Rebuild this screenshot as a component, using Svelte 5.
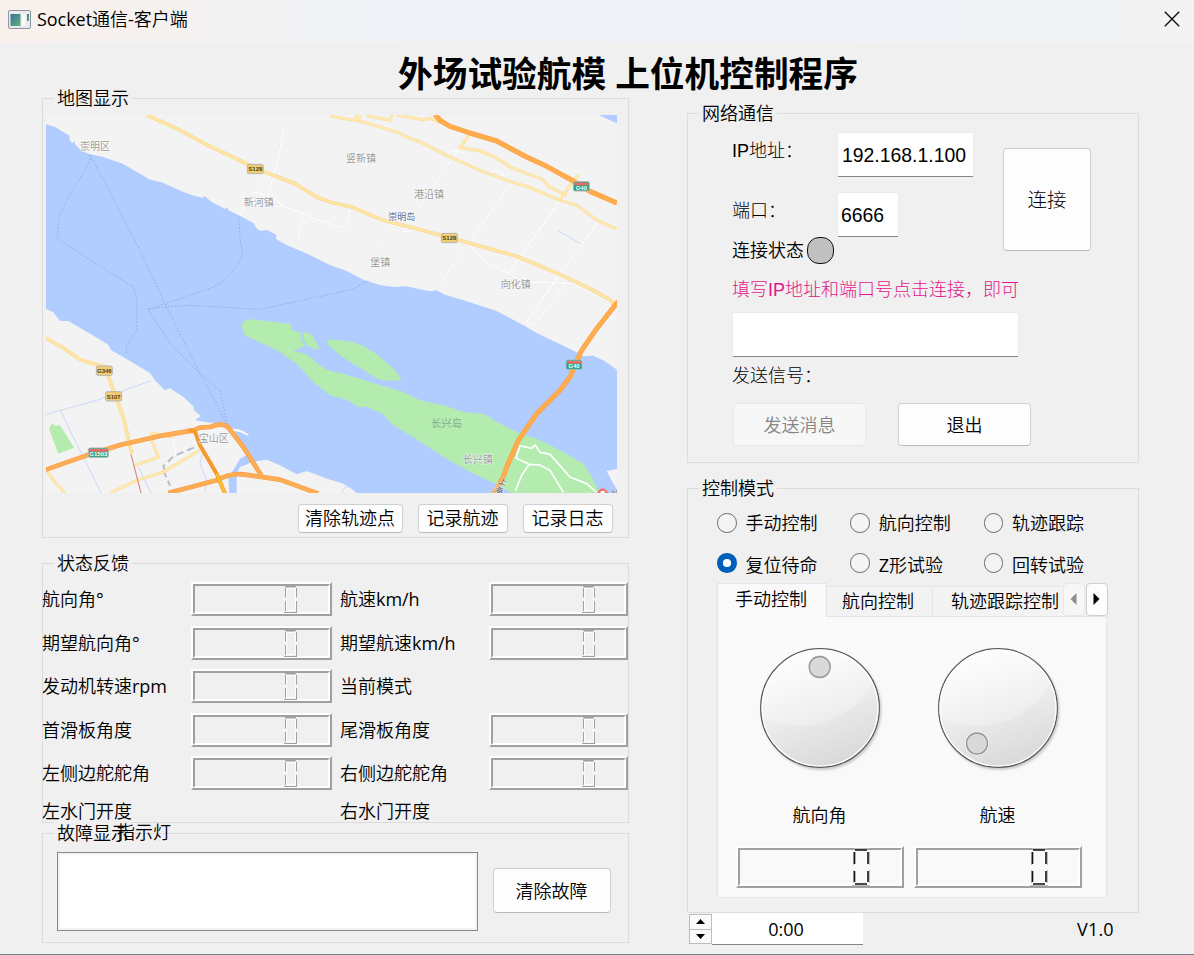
<script>
  const feedback = [
    ['航向角°', true, '航速km/h', true],
    ['期望航向角°', true, '期望航速km/h', true],
    ['发动机转速rpm', true, '当前模式', false],
    ['首滑板角度', true, '尾滑板角度', true],
    ['左侧边舵舵角', true, '右侧边舵舵角', true],
    ['左水门开度', false, '右水门开度', false],
  ];
  const modes = ['手动控制', '航向控制', '轨迹跟踪', '复位待命', 'Z形试验', '回转试验'];
  let mode = $state('复位待命');
  const dials = [
    { name: '航向角', kx: 59.7, ky: 19 },
    { name: '航速', kx: 39, ky: 95.5 },
  ];

  // Latin runs and CJK runs are set in different weights.
  const runs = (text) => text.match(/[\x00-\xff]+|[^\x00-\xff]+/g) ?? [];
  const isLatin = (run) => run.charCodeAt(0) < 256;

  const majorYellow = [
    'M320 14L415 57L500 103L640 170L700 195L765 220L830 260L870 275L935 290L1030 330L1110 350L1230 382L1330 410L1430 438L1560 492L1660 540L1710 568L1722 584',
    'M18 683L70 713L120 748L195 770L220 840L250 920L275 1030',
  ];
  const minorYellow = [
    'M870 18L960 32L1080 68L1095 78L1140 95L1220 135L1320 180L1415 215L1470 232L1560 270L1610 285L1675 332L1731 356',
    'M1290 70L1260 112L1320 122L1365 140L1415 172L1510 208L1525 228L1580 256',
    'M948 14L954 32M960 14L954 32M980 16L1050 30L1057 14M1070 14L1150 28L1170 24L1290 68M1600 210L1560 270M1600 206L1611 200L1604 220',
    'M335 990L355 1040L285 1065M210 1148L290 1110L370 1085L480 1020M18 1078L45 1115L75 1148M330 968L400 980',
  ];
  const whiteRoads = [
    'M733 45L712 160L682 260M600 316L640 250L670 205L700 195M640 245L700 262L730 288L790 310L830 328L870 338M790 312L775 386M700 288L730 288',
    'M870 340L920 356L932 290M1010 405L1055 345L1090 343M1090 365L1256 115L1300 165M1090 365L1130 360M1222 132L1240 120L1256 125',
    'M1415 215L1285 400L1195 528M1560 272L1405 488M1675 335L1560 490L1495 584M1285 400L1320 435L1330 450L1405 490L1450 515L1575 518L1600 520L1700 575M1575 520L1530 584M1345 188L1370 180L1400 205',
    'M1505 570L1460 632L1483 644L1540 570',
    'M395 980L408 1030L370 1070M45 1115L60 1148M565 956L600 962L625 974M590 958L612 966',
  ];
  const labels = [
    ['崇明区', 120, 118], ['新河镇', 611, 287], ['竖新镇', 918, 154], ['港沿镇', 1122, 262],
    ['堡镇', 991, 467], ['向化镇', 1382, 532], ['宝山区', 476, 995],
  ];
  const badges = [
    ['S128', 622, 162, 48, 'y'], ['S128', 1204, 369, 48, 'y'], ['G346', 169, 767, 48, 'y'],
    ['S107', 197, 844, 48, 'y'], ['G40', 1600, 214, 48, 'g'], ['G40', 1578, 749, 48, 'g'], ['G1503', 145, 1013, 60, 'g'],
  ];
  const expressway = 'M1185 12L1200 30L1230 48L1290 68L1370 92L1460 140L1520 168L1600 212L1650 243L1731 278M1735 572L1670 655L1625 720L1590 800L1560 840L1490 910L1435 990L1400 1070L1390 1100L1362 1150';
  const ringRoad = 'M18 1078L140 1035L240 1004L370 975L460 960L480 952L510 950Q550 935 565 952L610 1010L665 1097M385 1148L530 1110Q570 1088 610 1092L720 1108L835 1150';
</script>

{#snippet mixed(text)}{#each runs(text) as run}{#if isLatin(run)}<span class="lat">{run}</span>{:else}{run}{/if}{/each}{/snippet}

{#snippet lcd(big)}
  <div class="lcd" class:big>
    <div class="well">
      {#if big}
        <svg width="18" height="38" viewBox="0 0 18 38">
          <path d="M2 .5H17M1.5 4V17M1.5 22V35M17.5 4V17M17.5 22V35M0 37.5H18" stroke="#bcbcbc" fill="none" />
          <path d="M3 2H15M3 36H15M2.5 4V16M2.5 23V34M16 4V16M16 23V34" stroke="#111" stroke-width="1.6" fill="none" />
        </svg>
      {:else}
        <svg width="15" height="28" viewBox="0 0 15 28">
          <path d="M3 3.5H12M3 25.5H12M3.5 4V12M3.5 16V25M12.5 4V12M12.5 16V25M.5 14H4M11 14H14.5" stroke="#fff" fill="none" />
          <path d="M2 1.5H13M1 27.5H14M2.5 3V12.5M2.5 16V26M13.5 3V12.5M13.5 16V27" stroke="#a0a0a0" fill="none" />
          <path d="M3 2.5H12" stroke="#c8c8c8" />
        </svg>
      {/if}
    </div>
  </div>
{/snippet}

<div class="window">
  <header>
    <svg class="appicon" width="23" height="19" viewBox="0 0 23 19">
      <defs><linearGradient id="ai" x2="1" y2="1"><stop stop-color="#3f6d9c" /><stop offset="1" stop-color="#5fb57a" /></linearGradient></defs>
      <rect x=".5" y=".5" width="22" height="18" rx="1.5" fill="#e9ebee" stroke="#8f959c" />
      <rect x="2.5" y="4" width="10" height="12" fill="url(#ai)" />
      <rect x="13.5" y="4" width="4" height="12" fill="#fafafa" />
      <rect x="19" y="4" width="2" height="7" fill="url(#ai)" />
    </svg>
    <span class="caption">{@render mixed('Socket通信-客户端')}</span>
    <svg class="close" width="16" height="16" viewBox="0 0 16 16"><path d="M.8.8L15.2 15.2M15.2.8L.8 15.2" stroke="#111" stroke-width="1.4" /></svg>
  </header>

  <h1>外场试验航模 上位机控制程序</h1>

  <main>
    <div class="left">
      <section class="group map-group">
        <h2>地图显示</h2>
        <svg class="map" width="571" height="378" viewBox="18 14 1713 1134">
          <rect x="18" y="14" width="1713" height="1134" fill="#f3f3f3" />
          <path fill="#b1cdff" d="M18 42L45 50L75 68L88 76L90 92L97 98L106 92L104 100L125 122L150 132L190 140L248 160L300 190L325 205L345 212L365 216L430 245L465 257L488 262L494 257L515 275L556 296L562 290L565 300L600 316L640 338L652 357L665 362L680 358L710 374L708 386L740 404L795 427L870 464L920 482L970 508L1020 524L1060 530L1100 528L1170 543L1190 540L1215 553L1280 573L1370 602L1400 618L1450 645L1490 668L1540 692L1570 706L1615 728L1630 738L1660 736L1690 750L1731 778V1148H950L930 1132L905 1118L870 1108L800 1082L770 1092L720 1065L680 1048L640 1054L600 1070L590 1090V1148H568L565 1100L580 1080L600 1045L620 1035L595 1000L575 962L555 940L500 936L466 930L482 916L462 900L460 888L430 860L390 834L375 840L345 810L330 788L245 738L212 718L205 703L130 658L85 632L60 632L38 657L60 632L40 606L18 595Z" />
          <path fill="#b1cdff" d="M1675 14H1731V39Z" />
          <path fill="#f3f3f3" d="M1700 1082L1731 1076V1140L1716 1112Z" />
          <g fill="#b4ebaf">
            <path d="M605 650Q606 628 630 627L700 634L755 642L752 655L765 663L782 665L785 690L800 705L825 718L837 720Q835 695 808 667L790 665L790 690L804 708L837 719L800 705L765 720L800 726L830 755L855 775L870 782L910 790L1000 818L1090 845L1140 870L1210 885L1270 905L1335 912L1370 935L1430 965L1490 985L1570 1025L1630 1060L1655 1100L1675 1140L1680 1148H1415L1370 1122L1290 1085L1220 1045L1170 1013L1110 975L1060 945L1025 908L1000 900L980 888L960 892L920 868L870 855L820 815L770 760L715 722L640 687L615 675Z" />
            <path d="M862 690Q870 685 940 695Q985 710 1030 748Q1060 772 1084 805Q1080 814 1030 810Q1005 806 970 778Q900 740 862 700Z" />
            <path d="M35 942L40 938L42 946L60 945L102 1012L55 1030L27 955Z" />
          </g>
          <path d="M763 720L800 728L828 752L850 768L872 772M786 664L788 692L804 712L840 722L872 762" stroke="#b1cdff" stroke-width="6" fill="none" />
          <path d="M18 912L170 870L240 845L333 811M62 900L90 960L135 1050L183 1148M295 1070L333 1148M490 1020L480 1060L500 1110L495 1145M440 950V965M1552 360L1622 400M905 1148L915 1130L930 1130" stroke="#bfd4f8" stroke-width="2.5" fill="none" />
          <path d="M150 134V150L125 195L85 260L55 325L52 385L160 455L280 530L290 560V660L260 705L258 732M150 134L225 275L300 420L375 580L470 770L540 900L565 955M596 320L600 380L608 435Q570 510 520 530L375 580L325 598L395 705L470 780L540 840L565 955M325 595L400 588L450 585L660 597L720 584L870 552L940 535L985 512" stroke="#8eacdf" stroke-width="2.8" stroke-dasharray="5 5" fill="none" />
          {#each whiteRoads as d}
            <path {d} stroke="#e6e6e6" stroke-width="6" fill="none" /><path {d} stroke="#fff" stroke-width="4" fill="none" />
          {/each}
          <path d="M1428 1044L1440 1006L1475 1014L1485 1004L1500 1026L1530 1032L1590 1100L1640 1120L1670 1146M1428 1044L1468 1062L1500 1064L1530 1080L1570 1146M1468 1062L1445 1095L1426 1142" stroke="#fff" stroke-width="5" fill="none" />
          <path d="M375 1082L370 1068L400 1038L470 1008M370 1080L390 1126" stroke="#b7bec9" stroke-width="6" stroke-dasharray="22 12" fill="none" />
          {#each minorYellow as d}
            <path {d} stroke="#f8da92" stroke-width="9" fill="none" /><path {d} stroke="#ffe9b4" stroke-width="6" fill="none" />
          {/each}
          {#each majorYellow as d}
            <path {d} stroke="#f6d68c" stroke-width="11" fill="none" /><path {d} stroke="#ffe5a5" stroke-width="8" fill="none" />
          {/each}
          <path d="M273 1032L303 1148" stroke="#d98b85" stroke-width="3.5" />
          <path d={expressway} stroke="#f79f45" stroke-width="15" stroke-linejoin="round" fill="none" />
          <path d={expressway} stroke="#ffac4d" stroke-width="12" stroke-linejoin="round" fill="none" />
          <g fill="none" stroke-linejoin="round">
            <path d={ringRoad} stroke="#f29a42" stroke-width="14" />
            <path d={ringRoad} stroke="#ffad55" stroke-width="11" />
            <path d="M445 960L465 964L480 1005L530 1090L555 1150" stroke="#f59a2d" stroke-width="12" />
            <path d="M530 1090L555 1150" stroke="#ffc22e" stroke-width="7" />
          </g>
          <g font-size="30" fill="#9b9b9b" stroke="#fff" stroke-opacity=".6" stroke-width="4" paint-order="stroke">
            {#each labels as [t, x, y]}<text {x} {y}>{t}</text>{/each}
            <text x="1268" y="1058" fill="#a498aa">长兴镇</text>
            <text x="1173" y="949" font-size="31" fill="#83b08a" stroke="none">长兴岛</text>
            <text x="1045" y="328" font-size="27" fill="#5b6b90">崇明岛</text>
            <text transform="translate(1373 1117) rotate(22)" font-size="26" fill="#555">上</text>
            <text transform="translate(1361 1144) rotate(22)" font-size="26" fill="#555">海</text>
          </g>
          {#each badges as [t, x, y, w, k]}
            <rect {x} {y} width={w} height="28" rx="5" fill={k === 'y' ? '#f3cd72' : '#1fa383'} stroke="#b5b5b5" stroke-width="3" />
            {#if k === 'g'}<rect x={x + 3} y={y + 3} width={w - 6} height="8" fill="#ee6a66" />{/if}
            <text x={x + w / 2} y={y + (k === 'y' ? 21 : 25)} text-anchor="middle" font-size="18" font-weight="700" class="badge" fill={k === 'y' ? '#4a4020' : '#fff'}>{t}</text>
          {/each}
          <circle cx="1688" cy="1150" r="16" fill="#e87a70" /><rect x="1682" y="1142" width="12" height="6" fill="#fff" />
          <path d="M1716 1142L1724 1148M1731 1138V1148" stroke="#a48a80" stroke-width="4" />
        </svg>
        <div class="map-actions">
          <button class="w105">清除轨迹点</button><button>记录航迹</button><button>记录日志</button>
        </div>
      </section>

      <section class="group state-group">
        <h2>状态反馈</h2>
        <div class="readings">
          {#each feedback as [a, la, b, lb]}
            <div class="name">{@render mixed(a)}</div>
            <div class="value">{#if la}{@render lcd(false)}{/if}</div>
            <div class="name">{@render mixed(b)}</div>
            <div class="value narrow">{#if lb}{@render lcd(false)}{/if}</div>
          {/each}
        </div>
      </section>

      <section class="group fault-group">
        <h2>故障显示</h2>
        <span class="lamp">指示灯</span>
        <div class="log"></div>
        <button>清除故障</button>
      </section>
    </div>

    <div class="right">
      <section class="group net-group">
        <h2>网络通信</h2>
        <div class="net-top">
          <div class="net-fields">
            <div class="row"><span class="hei">IP地址：</span><div class="input w135">192.168.1.100</div></div>
            <div class="row second"><span class="hei">端口：</span><div class="input w60">6666</div></div>
            <div class="status"><span>连接状态</span><i></i></div>
          </div>
          <button class="connect">连接</button>
        </div>
        <p class="hint hei">填写IP地址和端口号点击连接，即可</p>
        <div class="input message"></div>
        <p class="signal hei">发送信号：</p>
        <div class="net-actions"><button disabled>发送消息</button><button>退出</button></div>
      </section>

      <section class="group ctl-group">
        <h2>控制模式</h2>
        <div class="modes">
          {#each modes as m}
            <button class="mode" onclick={() => (mode = m)}><i class:on={mode === m}></i><span>{@render mixed(m)}</span></button>
          {/each}
        </div>
        <div class="tabs">
          <div class="tab active">手动控制</div>
          <div class="tab">航向控制</div>
          <div class="tab last">轨迹跟踪控制</div>
          <div class="scroll off"><svg width="7" height="12" viewBox="0 0 7 12"><path d="M6.5 0V12L.5 6Z" fill="#8d8d8d" /></svg></div>
          <div class="scroll"><svg width="7" height="12" viewBox="0 0 7 12"><path d="M.5 0V12L6.5 6Z" fill="#000" /></svg></div>
        </div>
        <div class="pane">
          {#each dials as d, i}
            <div class="dialbox">
              <svg class="dial" width="132" height="132" viewBox="-6 -6 132 132">
                <defs>
                  <linearGradient id="body{i}" x1=".3" y1="0" x2=".65" y2="1"><stop stop-color="#fdfdfd" /><stop offset=".5" stop-color="#ececec" /><stop offset="1" stop-color="#d8d8d8" /></linearGradient>
                  <linearGradient id="gloss{i}" x1=".3" y1="0" x2=".6" y2="1"><stop stop-color="#fff" stop-opacity=".7" /><stop offset="1" stop-color="#fff" stop-opacity=".2" /></linearGradient>
                  <clipPath id="clip{i}"><circle cx="60" cy="60" r="58" /></clipPath>
                  <filter id="soft{i}"><feGaussianBlur stdDeviation="1.3" /></filter>
                </defs>
                <circle cx="61.5" cy="62" r="60" fill="#c9c9c9" filter="url(#soft{i})" />
                <circle cx="60" cy="60" r="59.3" fill="url(#body{i})" stroke="#5a5a5a" stroke-width="1.3" />
                <circle cx="40" cy="-5" r="83" fill="url(#gloss{i})" clip-path="url(#clip{i})" />
                <circle cx="60" cy="60" r="58" fill="none" stroke="#fff" stroke-width="1.2" />
                <circle cx={d.kx} cy={d.ky} r="11.6" fill="none" stroke="#f6f6f6" />
                <circle cx={d.kx} cy={d.ky} r="10.5" fill="#d9d9d9" stroke="#969696" stroke-width="1.3" />
              </svg>
              <span>{d.name}</span>
              {@render lcd(true)}
            </div>
          {/each}
        </div>
      </section>

      <footer>
        <div class="spin"><b><svg width="9" height="5" viewBox="0 0 9 5"><path d="M0 5H9L4.5 0Z" /></svg></b><b><svg width="9" height="5" viewBox="0 0 9 5"><path d="M0 0H9L4.5 5Z" /></svg></b></div>
        <div class="time">0:00</div>
        <span class="version">V1.0</span>
      </footer>
    </div>
  </main>
</div>

<style>
  :global(body) { margin: 0; }
  .window, .window * { box-sizing: border-box; }
  .window {
    width: 1194px; height: 955px; overflow: hidden; background: #f0f0f0; color: #000;
    border-bottom: 1px solid #70808c;
    font: 18px/24px "Open Sans", "Noto Sans CJK SC", sans-serif; font-weight: 350;
    white-space: nowrap;
  }
  header {
    height: 42px; display: flex; align-items: center; padding: 0 14px 4px 8px;
    background: linear-gradient(90deg, #faf1ed 0, #f5f2f0 170px, #eff3f8 400px, #eff3f9 850px, #f3f3f3 100%);
  }
  .caption { margin-left: 6px; font-size: 18px; line-height: 22px; flex: 1; }
  .lat { font-weight: 400; letter-spacing: -.05px; }
  h1 { margin: 7px 0 0 398px; height: 49px; font-size: 34.7px; line-height: 49px; font-weight: 700; }
  h2 { position: absolute; top: -13px; left: 11px; margin: 0; padding: 0 3px; font-size: 18px; line-height: 24px; font-weight: inherit; background: #f0f0f0; }
  p { margin: 0; }
  main { display: flex; gap: 58px; padding-left: 42px; }
  .left { width: 587px; }
  .right { width: 452px; padding-top: 15px; }
  .group { position: relative; border: 1px solid #dcdcdc; }
  button {
    font: inherit; color: #000; padding: 0 1px 0 0; background: #fdfdfd; border: 1px solid #d0d0d0;
    border-bottom-color: #b9b9b9; border-radius: 4px; display: block;
  }
  .map-group { height: 440px; padding: 16px 3px 0; }
  .map { display: block; font-family: "Noto Sans CJK SC", sans-serif; font-weight: 400; }
  .badge { font-family: "Liberation Sans", sans-serif; }
  .map-actions { display: flex; justify-content: flex-end; gap: 15px; padding: 11px 12px 0 0; }
  .map-actions button { width: 90px; height: 29px; line-height: 26px; padding-bottom: 1px; }
  .map-actions .w105 { width: 105px; }

  .state-group { height: 260px; margin-top: 25px; padding-top: 14px; }
  .readings { display: grid; grid-template-columns: 149px 149px 149px 139px; grid-template-rows: repeat(5, 43.5px) 32px; margin-left: -1px; align-items: start; }
  .name { line-height: 43px; }
  .name:nth-last-child(-n + 4) { line-height: 31px; }
  .value { padding-top: 4px; }
  .lcd { width: 141px; height: 34px; border: 2px solid; border-color: #fff #a0a0a0 #a0a0a0 #fff; }
  .narrow .lcd { width: 139px; }
  .narrow .well { padding-right: 28px; }
  .well { height: 100%; border: 2px solid; border-color: #a0a0a0 #fff #fff #a0a0a0; display: flex; justify-content: flex-end; padding-right: 30px; align-items: center; }
  .well svg { flex: none; }
  .lcd.big { width: 168px; height: 42px; }

  .fault-group { height: 110px; margin-top: 10px; padding: 18px 17px 0 14px; display: flex; justify-content: space-between; }
  .lamp { position: absolute; left: 74px; top: -14px; }
  .log { width: 421px; height: 79px; background: #fff; border: 1px solid #828790; box-shadow: inset 0 0 0 2px #f4f4f4; }
  .fault-group button { width: 118px; height: 45px; margin-top: 16px; }

  .net-group { height: 350px; padding: 18px 0 0 45px; }
  .hei { font-family: "Liberation Sans", "Noto Sans CJK SC", sans-serif; font-weight: 300; }
  .net-top { display: flex; height: 132px; }
  .net-fields { width: 270px; }
  .row { display: flex; height: 45px; }
  .row span { width: 104px; line-height: 38px; margin-left: -1px; }
  .row .input { margin-left: 1px; }
  .second { margin-top: 15px; }
  .input { height: 45px; background: #fff; border: 1px solid #ebebeb; border-bottom-color: #858585; border-radius: 2px; padding-left: 4px; font: 19.4px/44px "Liberation Sans", sans-serif; }
  .w135 { width: 137px; }
  .w60 { width: 62px; padding-left: 3px; }
  .status { display: flex; align-items: center; gap: 3px; height: 27px; margin-left: -1px; }
  .status span { padding-bottom: 1px; }
  .status i { width: 27px; height: 27px; border: 1.6px solid #111; border-radius: 12px; background: #c0c0c0; }
  .connect { width: 88px; height: 103px; margin-top: 16px; font-size: 19.5px; font-weight: 300; padding: 0; }
  .hint { color: #e0168a; line-height: 30px; margin: 11px 0 0 -1px; }
  .message { width: 287px; margin-top: 7px; margin-left: -1px; }
  .signal { line-height: 30px; margin: 4px 0 0 -1px; }
  .net-actions { display: flex; gap: 32px; margin-top: 12px; }
  .net-actions button { width: 133px; height: 43px; padding: 0; }
  .net-actions button:disabled { color: #858585; background: #f7f7f7; border-color: #e8e8e8; }

  .ctl-group { height: 425px; margin-top: 25px; padding: 14px 0 0 29px; }
  .modes { display: grid; grid-template-columns: 133.3px 133.3px 133px; grid-template-rows: 40px 40px; height: 80px; }
  .mode { display: flex; align-items: center; gap: 9px; background: none; border: 0; height: 40px; padding: 0; }
  .mode i { width: 19.5px; height: 19.5px; border: 1.3px solid #6b6b6b; border-radius: 50%; background: #f4f4f4; }
  .mode i.on { border: 6px solid #005fb8; background: #fff; }
  .mode:nth-child(n + 4) > span { padding-top: 3px; }
  .tabs { display: flex; height: 33px; align-items: flex-end; }
  .tab { height: 30px; width: 106px; padding-left: 15px; line-height: 28px; background: #f3f3f3; border: 1px solid #e5e5e5; border-width: 1px 1px 0 0; overflow: hidden; }
  .tab.active { width: 110px; height: 34px; line-height: 31px; padding-left: 17px; margin-bottom: -1px; background: #f9f9f9; border-left-width: 1px; }
  .tab.last { width: 130px; padding-left: 18px; border-right: 0; }
  .scroll { width: 22px; height: 33px; margin-left: 1px; background: #fdfdfd; border: 1px solid #cfcfcf; border-radius: 4px; display: flex; align-items: center; justify-content: center; }
  .scroll.off { background: #f7f7f7; border-color: #e8e8e8; margin-left: 0; }
  .scroll svg { margin: -2px 2px 0 0; }
  .pane { width: 390px; height: 282px; background: #f9f9f9; border: 1px solid #e5e5e5; display: flex; gap: 10px; padding: 25px 0 0 18px; }
  .dialbox { width: 168px; display: flex; flex-direction: column; align-items: center; }
  .dial { display: block; }
  .dialbox span { margin: 28px 1px 18px 0; line-height: 26px; }

  footer { display: flex; height: 32px; align-items: center; padding-left: 2px; font-weight: 400; }
  .spin { width: 23px; height: 30px; display: flex; flex-direction: column; border: 1px solid #bdbdbd; background: #fafafa; }
  .spin b { flex: 1; display: flex; align-items: center; justify-content: center; }
  .spin b + b { border-top: 1px solid #bdbdbd; }
  .time { width: 151px; height: 32px; line-height: 33px; background: #fff; border-bottom: 1px solid #858585; text-align: center; padding-right: 3px; }
  .version { margin-left: 214px; line-height: 35px; letter-spacing: .2px; }
</style>
